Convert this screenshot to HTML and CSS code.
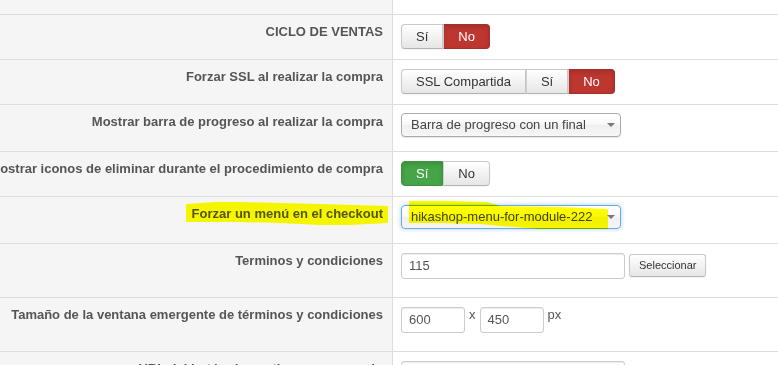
FILE: index.html
```html
<!DOCTYPE html>
<html lang="es">
<head>
<meta charset="utf-8">
<title>Configuración</title>
<link rel="stylesheet" href="styles.css">
</head>
<body>
<div class="form">
  <div class="row row-top"><div class="key"></div><div class="val"></div></div>

  <div class="row row-btn">
    <div class="key"><span>CICLO DE VENTAS</span></div>
    <div class="val">
      <div class="btn-group">
        <span class="btn">Sí</span><span class="btn active-no">No</span>
      </div>
    </div>
  </div>

  <div class="row row-btn">
    <div class="key"><span>Forzar SSL al realizar la compra</span></div>
    <div class="val">
      <div class="btn-group">
        <span class="btn">SSL Compartida</span><span class="btn">Sí</span><span class="btn active-no">No</span>
      </div>
    </div>
  </div>

  <div class="row row-select">
    <div class="key"><span>Mostrar barra de progreso al realizar la compra</span></div>
    <div class="val">
      <div class="select"><span>Barra de progreso con un final</span><i class="caret"></i></div>
    </div>
  </div>

  <div class="row row-btn">
    <div class="key"><span>Mostrar iconos de eliminar durante el procedimiento de compra</span></div>
    <div class="val">
      <div class="btn-group">
        <span class="btn active-yes">Sí</span><span class="btn">No</span>
      </div>
    </div>
  </div>

  <div class="row row-select marked">
    <div class="key"><span>Forzar un menú en el checkout</span></div>
    <div class="val">
      <div class="select focus"><span>hikashop-menu-for-module-222</span><i class="caret"></i></div>
    </div>
    <svg class="marker" width="778" height="46" viewBox="0 0 778 46">
      <polygon points="187,8 215,6 240,6 280,7 320,8 387,10 387,25 350,27 320,27 280,25 240,24 187,24"/>
      <polygon points="410,5 450,5 487,6 500,10 560,11 607,13 607,31 540,31 500,28 480,26 440,25 410,25"/>
    </svg>
  </div>

  <div class="row row-input">
    <div class="key"><span>Terminos y condiciones</span></div>
    <div class="val">
      <div class="inline">
        <span class="input wide">115</span><span class="btn btn-small">Seleccionar</span>
      </div>
    </div>
  </div>

  <div class="row row-input">
    <div class="key"><span>Tamaño de la ventana emergente de términos y condiciones</span></div>
    <div class="val">
      <div class="inline">
        <span class="input small">600</span><span class="sep">x</span><span class="input small">450</span><span class="sep">px</span>
      </div>
    </div>
  </div>

  <div class="row row-input">
    <div class="key"><span>URL del botón de continuar comprando</span></div>
    <div class="val">
      <div class="inline">
        <span class="input wide"></span>
      </div>
    </div>
  </div>
</div>
</body>
</html>
```

FILE: styles.css
```css
html, body {
  margin: 0;
  padding: 0;
  background: #ffffff;
  overflow: hidden;
}

body {
  font-family: "Liberation Sans", Arial, sans-serif;
  font-size: 13px;
  line-height: 18px;
  color: #333;
  width: 778px;
  height: 365px;
}

.form {
  width: 778px;
}

.row {
  display: grid;
  grid-template-columns: 393px 1fr;
  border-bottom: 1px solid #dedede;
}

.row-top { height: 14px; }
.row-btn { height: 44px; }
.row-select { height: 46px; }
.row-input { height: 53px; }

.key {
  box-sizing: border-box;
  background: #f5f5f5;
  border-right: 1px solid #dedede;
  padding: 8px 9px 0 0;
  display: flex;
  justify-content: flex-end;
  align-items: flex-start;
  font-weight: bold;
  color: #555;
  white-space: nowrap;
  overflow: hidden;
}

.key span {
  flex-shrink: 0;
}

.val {
  padding: 8px 8px 0 8px;
  display: flex;
  align-items: flex-start;
}

/* button groups */
.btn-group {
  display: flex;
  margin-top: 1px;
}

.btn {
  box-sizing: border-box;
  display: inline-block;
  height: 25px;
  line-height: 23px;
  padding: 0 14px;
  font-size: 13px;
  color: #333;
  background: linear-gradient(#ffffff, #e6e6e6);
  border: 1px solid #c8c8c8;
  border-bottom-color: #b3b3b3;
  box-shadow: inset 0 1px 0 rgba(255,255,255,.2), 0 1px 2px rgba(0,0,0,.05);
  white-space: nowrap;
}

.btn-group .btn {
  border-radius: 0;
}

.btn-group .btn:first-child {
  border-radius: 4px 0 0 4px;
}

.btn-group .btn:last-child {
  border-radius: 0 4px 4px 0;
}

.btn-group .btn + .btn {
  border-left-color: #d0d0d0;
}

.btn.active-no {
  background: #bd362f;
  border-color: #a52f29;
  color: #fff;
  box-shadow: inset 0 2px 4px rgba(0,0,0,.15);
}

.btn.active-yes {
  background: #46a546;
  border-color: #3f943f;
  color: #fff;
  box-shadow: inset 0 2px 4px rgba(0,0,0,.15);
}

/* select */
.select {
  box-sizing: border-box;
  width: 220px;
  height: 24px;
  display: flex;
  align-items: center;
  padding: 0 5px 0 9px;
  border: 1px solid #aaa;
  border-radius: 4px;
  background: linear-gradient(#ffffff 20%, #f7f7f7 50%, #f0f0f0 52%, #f5f5f5 100%);
  color: #444;
  font-size: 13px;
  box-shadow: 0 0 3px #fff inset, 0 1px 1px rgba(0,0,0,.1);
}

.select span {
  white-space: nowrap;
}

.select .caret {
  margin-left: auto;
  width: 0;
  height: 0;
  border-left: 4px solid transparent;
  border-right: 4px solid transparent;
  border-top: 4px solid #777;
}

.select.focus {
  border-color: #6ea7e8;
  box-shadow: 0 0 4px rgba(82,168,236,.55);
}

/* inputs */
.inline {
  display: flex;
  align-items: flex-start;
}

.input {
  box-sizing: border-box;
  display: inline-block;
  height: 26px;
  line-height: 24px;
  margin-top: 1px;
  padding: 0 7px;
  border: 1px solid #ccc;
  border-radius: 3px;
  background: #fff;
  color: #555;
  box-shadow: inset 0 1px 1px rgba(0,0,0,.075);
}

.input.wide { width: 224px; }
.input.small { width: 64px; }

.sep {
  color: #555;
  padding: 0 4px;
}

.btn-small {
  height: 23px;
  line-height: 21px;
  padding: 0 9px;
  font-size: 11px;
  border-radius: 3px;
  margin-top: 2px;
  margin-left: 4px;
}

/* highlighter marks */
.marked {
  position: relative;
}

.marker {
  position: absolute;
  left: 0;
  top: 0;
  pointer-events: none;
  mix-blend-mode: multiply;
}

.marker polygon {
  fill: #ffff00;
  stroke: #ffff00;
  stroke-width: 2;
  stroke-linejoin: round;
}
```
